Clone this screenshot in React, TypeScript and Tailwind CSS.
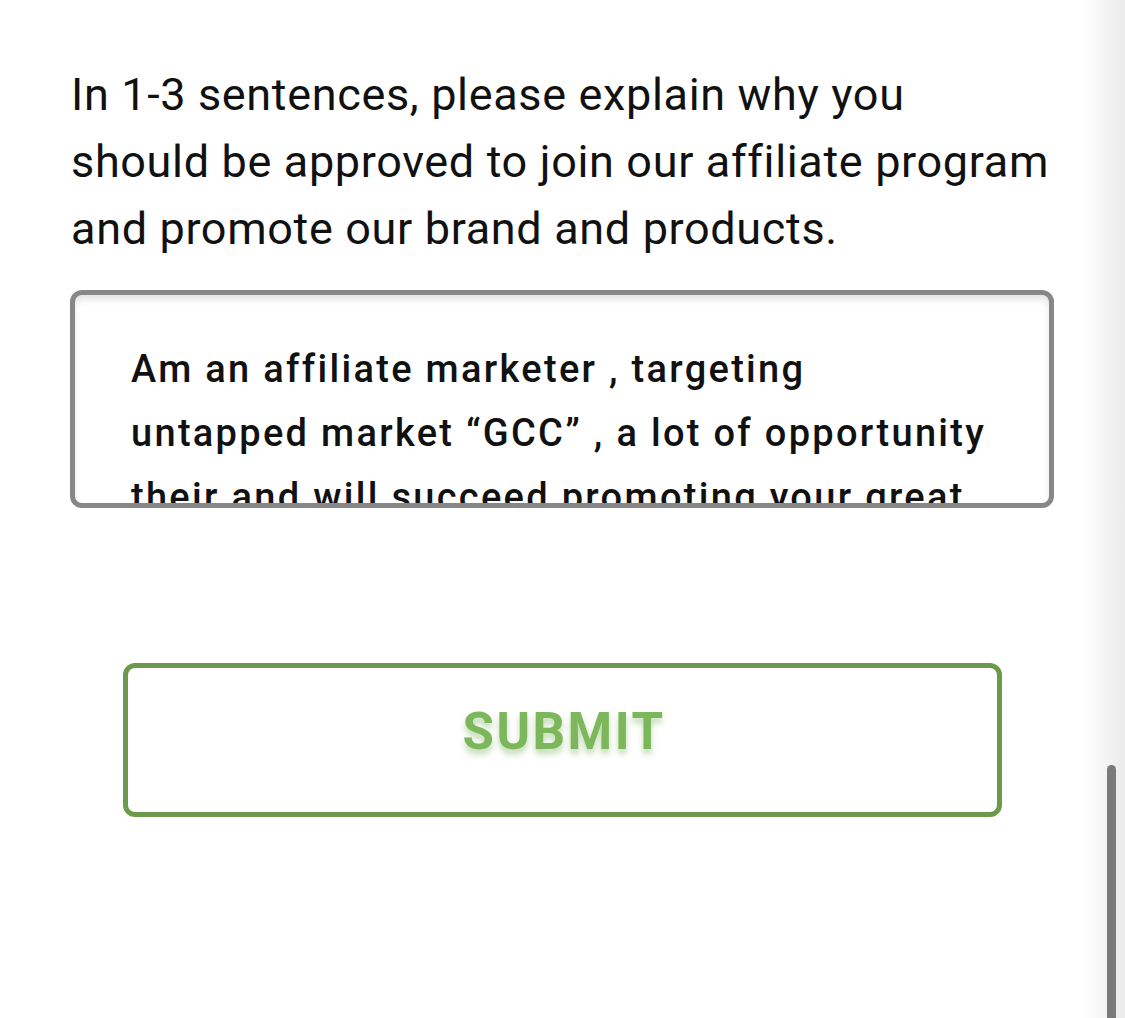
import React from "react";

export default function App() {
  return (
    <div className="flex w-[1125px] h-[1018px] bg-white overflow-hidden">
      <main className="flex-1 flex flex-col pl-[70px] pr-[29px] pt-[61px]">
        <h1
          className="pl-px text-[45px] leading-[67px] tracking-[0.65px] text-[#111] font-normal whitespace-nowrap"
          style={{ fontFamily: "Roboto, 'Liberation Sans', sans-serif" }}
        >
          In 1-3 sentences, please explain why you
          <br />
          should be approved to join our affiliate program
          <br />
          and promote our brand and products.
        </h1>
        <div
          className="mt-[28px] h-[218px] border-[5px] border-[#878787] rounded-[12px] overflow-hidden pl-[56px] pr-[20px] pt-[42px] shadow-[inset_0_5px_6px_rgba(0,0,0,0.10)]"
          style={{ fontFamily: "Roboto, 'Liberation Sans', sans-serif" }}
        >
          <div className="text-[38px] leading-[64px] tracking-[2.3px] font-medium text-[#111] whitespace-nowrap">
            <div>Am an affiliate marketer , targeting</div>
            <div>untapped market “GCC” , a lot of opportunity</div>
            <div>their and will succeed promoting your great</div>
            <div>products.</div>
          </div>
        </div>
        <button
          className="mt-[155px] ml-[53px] mr-[52px] h-[154px] border-[5px] border-[#6a9a4a] rounded-[12px] bg-white flex items-center justify-center pb-[16px]"
          style={{ fontFamily: "Roboto, 'Liberation Sans', sans-serif" }}
        >
          <span className="pl-[3px] text-[51px] font-bold text-[#7cb75c] tracking-[2.5px] [text-shadow:0_5px_6px_rgba(110,170,80,0.45)]">
            SUBMIT
          </span>
        </button>
      </main>
      <aside className="w-[42px] h-full bg-gradient-to-r from-white to-[#ebebeb] flex flex-col justify-end pl-[24px]">
        <div className="w-[9px] h-[253px] bg-[#7a7a7a] rounded-t-[5px]" />
      </aside>
    </div>
  );
}
